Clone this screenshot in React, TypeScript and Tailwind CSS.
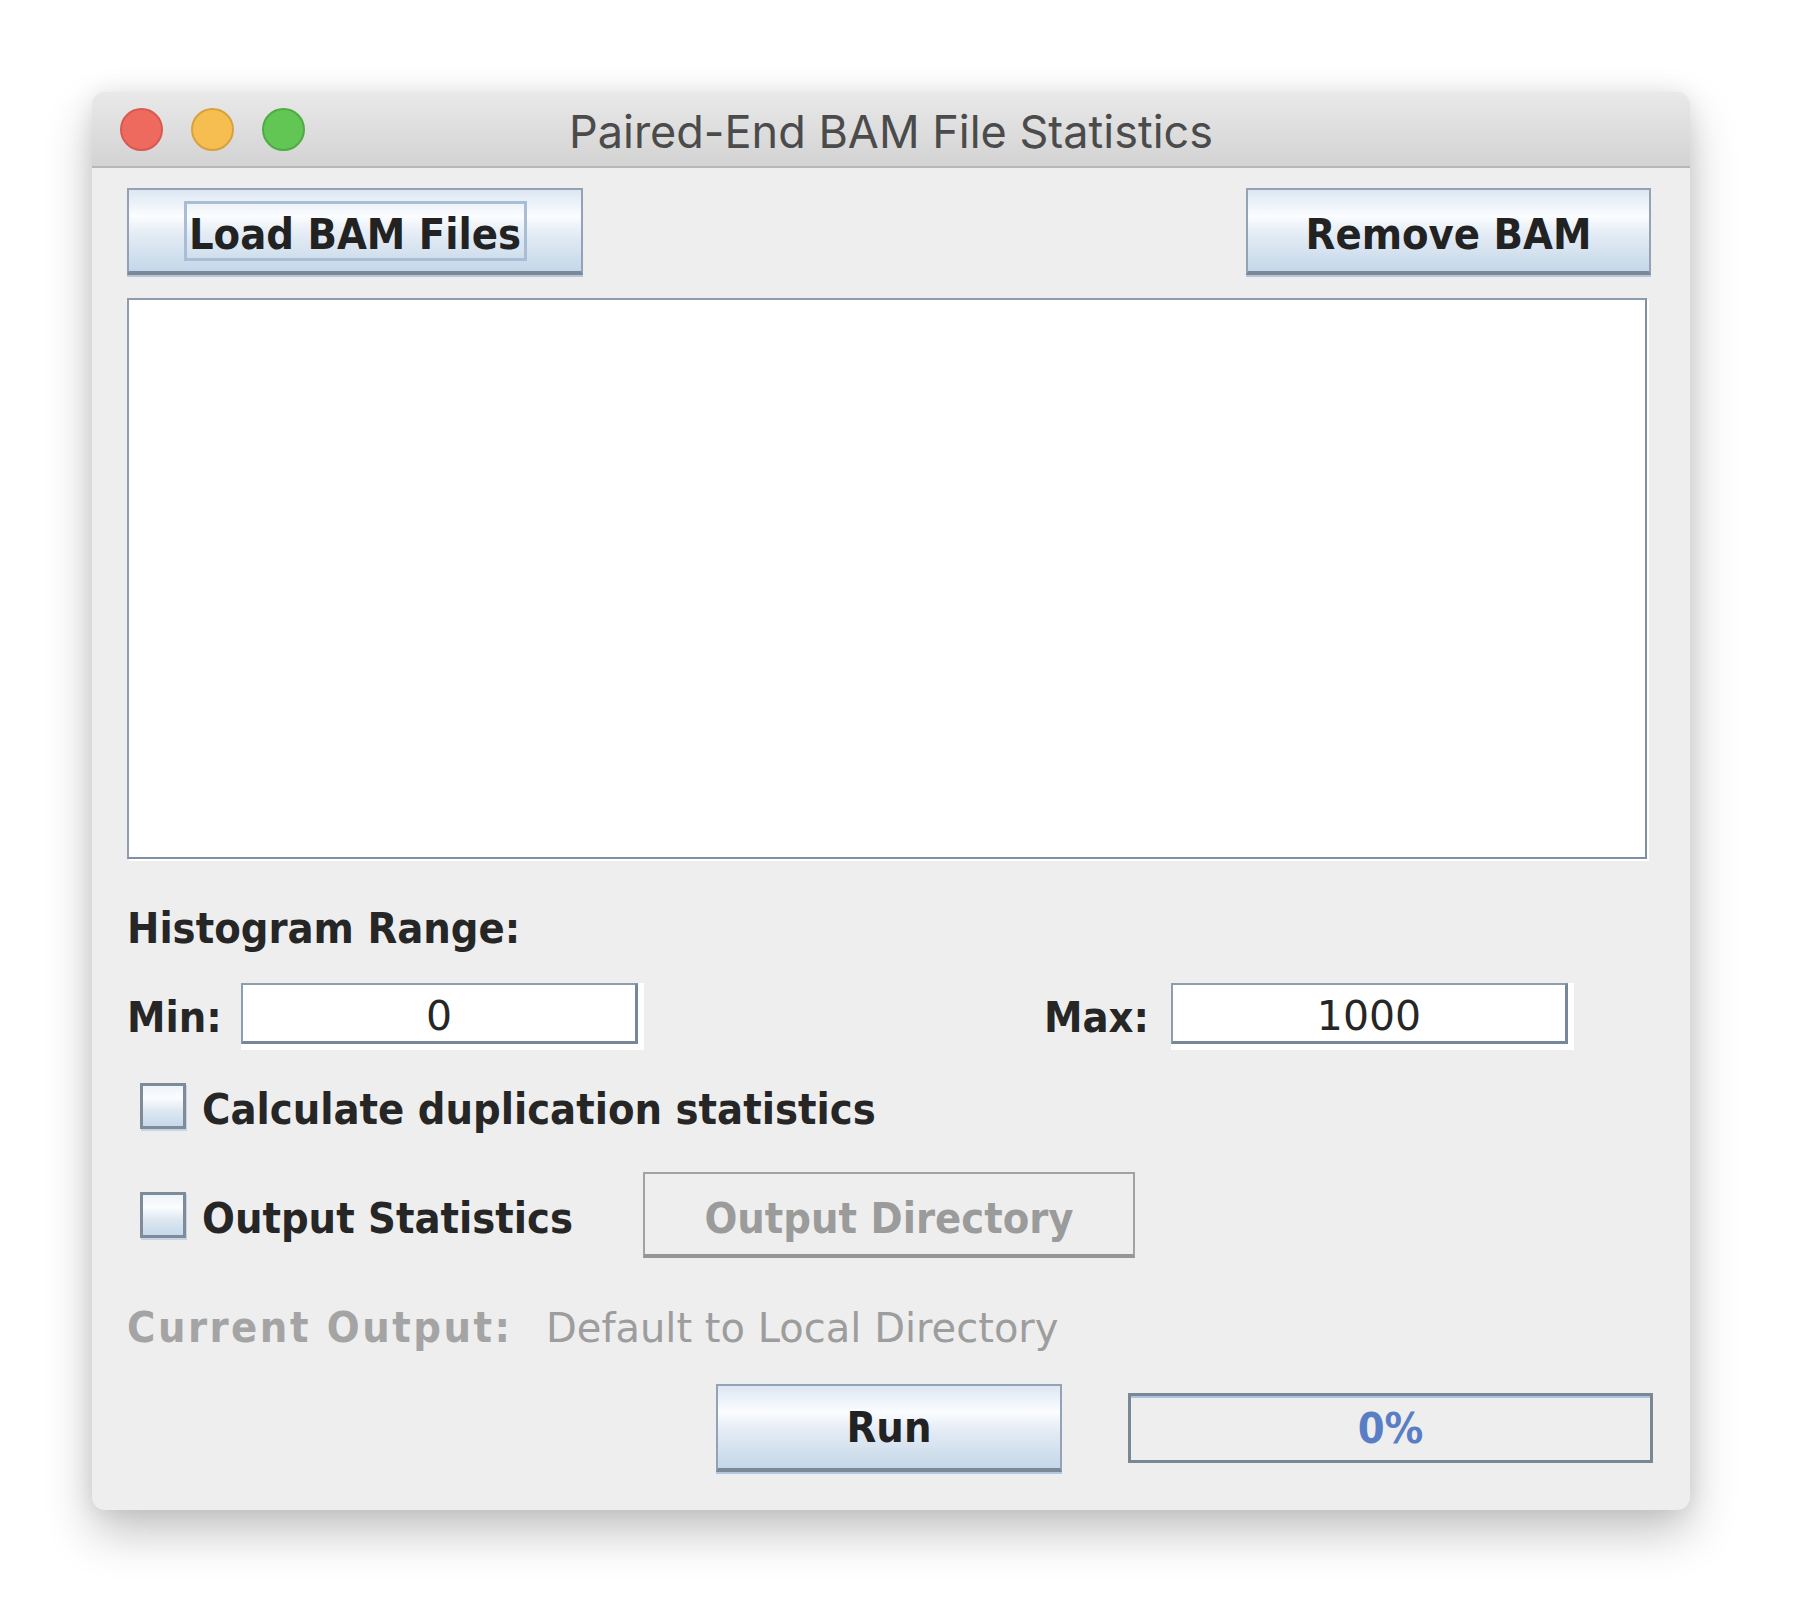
import React from "react";

const bold =
  "font-['DejaVu_Sans_Condensed','DejaVu_Sans',sans-serif] [font-stretch:condensed] font-bold text-[43px] leading-none";
const regular = "font-['DejaVu_Sans',sans-serif] text-[41px] leading-none";

function AquaButton({
  className,
  children,
}: {
  className: string;
  children: React.ReactNode;
}) {
  return (
    <div
      className={
        "flex items-center justify-center border-2 border-[#93a3b5] border-b-[4px] border-b-[#7b8997] bg-[linear-gradient(to_bottom,#dde7f2_0%,#fbfdff_32%,#e6edf5_52%,#c4d7e9_100%)] shadow-[0_2px_0_#b3c8de] text-[#222] " +
        className
      }
    >
      {children}
    </div>
  );
}

function Field({ value }: { value: string }) {
  return (
    <div className="w-[403px] h-[67px] bg-white">
      <div
        className={
          "w-[397px] h-[61px] pt-[7px] bg-white border-t-2 border-l-2 border-[#8d9db0] border-r-[3px] border-b-[3px] border-r-[#77879a] border-b-[#77879a] flex items-center justify-center text-[#262626] " +
          regular
        }
      >
        {value}
      </div>
    </div>
  );
}

function Checkbox() {
  return (
    <div className="w-[46px] h-[46px] shrink-0 border-[3px] border-[#7e8c9a] bg-[linear-gradient(to_bottom,#eef3f9_0%,#fbfdff_30%,#dfe8f2_60%,#c7d9eb_100%)] shadow-[1px_2px_0_#c5d5e6]" />
  );
}

export default function App() {
  return (
    <div className="w-[1800px] min-h-[1620px] bg-white pl-[92px] pt-[92px]">
      <div className="w-[1598px] h-[1418px] rounded-[13px] bg-[#eeeeee] overflow-hidden flex flex-col shadow-[0_22px_48px_rgba(0,0,0,0.24),0_0_22px_rgba(0,0,0,0.08)]">
        {/* Title bar */}
        <div className="h-[76px] shrink-0 grid grid-cols-[1fr_auto_1fr] items-center bg-[linear-gradient(to_bottom,#e9e9e9,#d3d3d3)] border-b-2 border-[#b7b7b7]">
          <div className="flex items-center gap-[28px] pl-[28px]">
            <div className="w-[43px] h-[43px] rounded-full bg-[#ee6a5f] border-2 border-[#d65a4f]" />
            <div className="w-[43px] h-[43px] rounded-full bg-[#f6be50] border-2 border-[#d9a13e]" />
            <div className="w-[43px] h-[43px] rounded-full bg-[#62c655] border-2 border-[#4fab42]" />
          </div>
          <div className="pt-[5px] font-['Inter',sans-serif] text-[45px] leading-none text-[#4b4b4b]">
            Paired-End BAM File Statistics
          </div>
          <div />
        </div>

        {/* Content */}
        <div className="flex flex-col pl-[35px]">
          {/* Buttons row */}
          <div className="mt-[20px] flex justify-between pr-[39px]">
            <AquaButton className="w-[456px] h-[87px]">
              <div
                className={
                  "w-[343px] h-[60px] mt-[1px] pt-[7px] border-[3px] border-[#a9bdd4] flex items-center justify-center " +
                  bold
                }
              >
                Load BAM Files
              </div>
            </AquaButton>
            <AquaButton className={"w-[405px] h-[87px] pt-[7px] " + bold}>
              Remove BAM
            </AquaButton>
          </div>

          {/* List */}
          <div className="mt-[23px] w-[1520px] h-[561px] bg-white border-2 border-[#8d9cae] border-r-[#7f90a3] border-b-[#7f90a3] shadow-[2px_2px_0_#ffffff]" />

          {/* Histogram Range */}
          <div className={"mt-[48px] text-[#262626] " + bold}>
            Histogram Range:
          </div>

          {/* Min / Max row */}
          <div className="mt-[33px] flex items-start">
            <div
              className={
                "w-[114px] h-[61px] pt-[7px] flex items-center text-[#262626] " +
                bold
              }
            >
              Min:
            </div>
            <Field value="0" />
            <div
              className={
                "w-[505px] h-[61px] pt-[7px] flex items-center justify-end text-[#262626] " +
                bold
              }
            >
              Max:
            </div>
            <div className="ml-[22px]">
              <Field value="1000" />
            </div>
          </div>

          {/* Checkbox 1 */}
          <div className="mt-[33px] flex items-center pl-[13px] h-[46px]">
            <Checkbox />
            <div
              className={
                "ml-[16px] h-[46px] pt-[7px] flex items-center text-[#262626] " +
                bold
              }
            >
              Calculate duplication statistics
            </div>
          </div>

          {/* Checkbox 2 + Output Directory */}
          <div className="mt-[43px] flex items-center">
            <div className="w-[516px] h-[46px] flex items-center pl-[13px]">
              <Checkbox />
              <div
                className={
                  "ml-[16px] h-[46px] pt-[7px] flex items-center text-[#262626] " +
                  bold
                }
              >
                Output Statistics
              </div>
            </div>
            <div
              className={
                "w-[492px] h-[86px] pt-[8px] flex items-center justify-center border-2 border-[#a2a2a2] border-b-[4px] border-b-[#959595] text-[#9b9b9b] " +
                bold
              }
            >
              Output Directory
            </div>
          </div>

          {/* Current output */}
          <div className="mt-[48px] flex items-center">
            <div
              className={"w-[419px] text-[#a4a4a4] tracking-[2.5px] " + bold}
            >
              Current Output:
            </div>
            <div className="font-['DejaVu_Sans',sans-serif] text-[40px] leading-none text-[#9d9d9d]">
              Default to Local Directory
            </div>
          </div>

          {/* Run row */}
          <div className="mt-[35px] flex items-center">
            <AquaButton className={"ml-[589px] w-[346px] h-[88px] " + bold}>
              Run
            </AquaButton>
            <div
              className={
                "ml-[66px] w-[525px] h-[70px] border-[3px] border-[#7a8896] bg-[#eeeeee] shadow-[inset_0_2px_0_#a9c3e3] flex items-center justify-center text-[#5a7ec6] " +
                bold
              }
            >
              0%
            </div>
          </div>
        </div>
      </div>
    </div>
  );
}
